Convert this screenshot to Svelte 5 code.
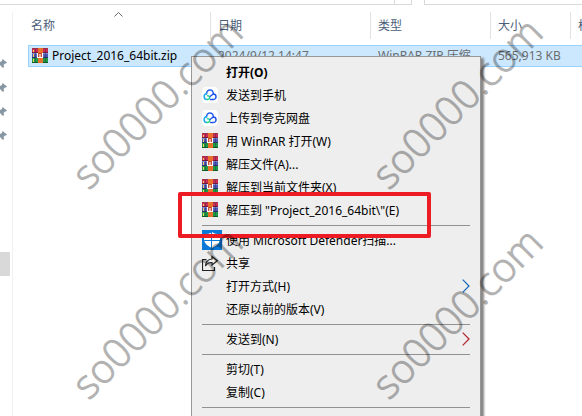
<script>
  const columns = [
    { key: 'name', label: '名称', sorted: true },
    { key: 'date', label: '日期' },
    { key: 'type', label: '类型' },
    { key: 'size', label: '大小' },
    { key: 'tag', label: '标' },
  ]

  const file = {
    name: 'Project_2016_64bit.zip',
    date: '2024/9/12 14:47',
    type: 'WinRAR ZIP 压缩...',
    size: '565,913 KB',
  }

  const groups = [
    [
      { label: '打开(O)', bold: true },
      { label: '发送到手机', icon: 'cloud' },
      { label: '上传到夸克网盘', icon: 'cloud' },
      { label: '用 WinRAR 打开(W)', icon: 'rar' },
      { label: '解压文件(A)...', icon: 'rar' },
      { label: '解压到当前文件夹(X)', icon: 'rar' },
      { label: '解压到 "Project_2016_64bit\\"(E)', icon: 'rar' },
    ],
    [
      { label: '使用 Microsoft Defender扫描...', icon: 'shield' },
      { label: '共享', icon: 'share' },
      { label: '打开方式(H)', arrow: 'blue' },
      { label: '还原以前的版本(V)' },
    ],
    [{ label: '发送到(N)', arrow: 'red' }],
    [{ label: '剪切(T)' }, { label: '复制(C)' }],
    [],
  ]

  const pins = [1, 2, 3, 4]

  const marks = [
    [89, 191],
    [389, 191],
    [89, 401],
    [389, 401],
  ]
</script>

{#snippet rarIcon()}
  <svg class="icon" width="16" height="16" viewBox="0 0 16 16" aria-hidden="true">
    <rect y="0" width="16" height="5" fill="#c92c55" />
    <rect y="0" width="16" height="1" fill="#a03048" />
    <rect y="4" width="16" height="1" fill="#7d1838" />
    <rect y="5" width="16" height="5" fill="#4d57b5" />
    <rect y="5" width="16" height="1" fill="#7a86d8" />
    <rect y="9" width="16" height="1" fill="#2b2f6e" />
    <rect y="10" width="16" height="5" fill="#1f9a45" />
    <rect y="14" width="16" height="1" fill="#0c6027" />
    <path d="M1 2h1v2H1zM1 6h1v3H1zM1 11h1v3H1z" fill="#f4d35c" />
    <path d="M3 1h1v14H3zM13 1h1v14h-1z" fill="#20284a" opacity=".35" />
    <rect x="6" y="0" width="5" height="15" fill="#e8702a" />
    <rect x="5" y="5" width="6" height="5" fill="#c33c22" />
    <path d="M5.500 5v4.500h5V5M8 6v3" fill="none" stroke="#fff" stroke-width="1.200" />
  </svg>
{/snippet}

<div class="window">
  <div class="toolbar">
    <div class="address"><span></span></div>
    <div class="search"></div>
  </div>

  <div class="content">
    <aside>
      <ul class="pins">
        {#each pins as pin (pin)}
          <li>
            <svg width="8" height="10" viewBox="0 0 8 10" aria-hidden="true">
              <path d="M2.500 0 7 3.500 6 4.500 5 4.500 3.500 6 4 8 3 9 0 6V3L2 2z" fill="#8796a3" />
            </svg>
          </li>
        {/each}
      </ul>
      <div class="current"></div>
    </aside>

    <main>
      <table>
        <thead>
          <tr>
            {#each columns as col (col.key)}
              <th class={col.key} scope="col">
                <span>{col.label}</span>
                {#if col.sorted}
                  <svg class="sort" width="9" height="5" viewBox="0 0 9 5" aria-hidden="true">
                    <path d="M.5 4.500l4-4 4 4" fill="none" stroke="#666" />
                  </svg>
                {/if}
              </th>
            {/each}
          </tr>
        </thead>
        <tbody>
          <tr>
            <td><div class="file">{@render rarIcon()}{file.name}</div></td>
            <td>{file.date}</td>
            <td>{file.type}</td>
            <td>{file.size}</td>
            <td></td>
          </tr>
        </tbody>
      </table>
    </main>
  </div>

  <div class="menu" role="menu">
    {#each groups as group, i}
      {#if i > 0}<hr />{/if}
      {#each group as item (item.label)}
        <button type="button" role="menuitem" class:bold={item.bold}>
          <span class="slot">
            {#if item.icon === 'rar'}
              {@render rarIcon()}
            {:else if item.icon === 'cloud'}
              <svg class="icon" width="16" height="16" viewBox="0 0 16 16" aria-hidden="true">
                <rect width="16" height="16" rx="4" fill="#fff" />
                <g fill="none" stroke-width="1.500" stroke-linecap="round">
                  <path d="M4.500 7C4.500 1.500 11.300 1.700 11.300 7" stroke="#2b63f0" />
                  <path d="M4.700 6.500C1.200 7 1.200 12.500 5 12.500" stroke="#20a8f4" />
                  <path d="M5 12.500C8.500 12.500 8.500 8.500 5.500 8.800" stroke="#25dc8c" />
                  <path d="M8.500 12.500h3c3.400 0 3.400-5.500-.2-5.500L8 9.500" stroke="#2354ee" />
                </g>
              </svg>
            {:else if item.icon === 'shield'}
              <svg class="icon" width="20" height="20" viewBox="0 0 20 20" aria-hidden="true">
                <rect width="20" height="20" fill="#0a78d7" />
                <path d="M10 2c2 1.500 4.500 2.200 8 2.200V9c0 4.500-4 7.200-8 9-4-1.800-8-4.500-8-9V4.200C5.500 4.200 8 3.500 10 2z" fill="#fff" />
                <path d="M9.500 2v16M2 10.500h16" stroke="#0a78d7" />
              </svg>
            {:else if item.icon === 'share'}
              <svg class="icon" width="16" height="16" viewBox="0 0 16 16" aria-hidden="true">
                <path d="M4.500 4.500h-4v11h12V12M10 1.500l5.300 4.300L10 10V7.500C7 7.300 5 8.500 3.500 11 3.700 7 6 4.300 10 4z" fill="none" stroke="#222" stroke-width="1.200" />
              </svg>
            {/if}
          </span>
          <span class="label">{item.label}</span>
          {#if item.arrow}
            <svg class="arrow {item.arrow}" width="8" height="14" viewBox="0 0 8 14" aria-hidden="true">
              <path d="M.7.700 7 7 .7 13.300" fill="none" stroke="currentColor" stroke-width="1.200" />
            </svg>
          {/if}
        </button>
      {/each}
    {/each}
  </div>

  <div class="highlight"></div>

  <svg class="watermark" aria-hidden="true">
    {#each marks as [x, y]}
      <text transform="translate({x} {y}) rotate(-45)">so0000.com</text>
    {/each}
  </svg>
</div>

<style>
  :global(body) {
    margin: 0;
    background: #fff;
  }

  .window {
    position: relative;
    height: 100vh;
    overflow: hidden;
    display: flex;
    flex-direction: column;
    font-family: "Noto Sans", "Noto Sans CJK SC", sans-serif;
    font-size: 12px;
    color: #000;
  }

  .toolbar {
    display: flex;
    gap: 12px;
    height: 5px;
    flex: none;
  }

  .address,
  .search {
    box-sizing: border-box;
    border: 1px solid #d9d9d9;
    border-top: 0;
  }

  .address {
    flex: 412;
    display: flex;
    justify-content: flex-end;
    border-left: 0;
  }

  .address span {
    width: 16px;
    border-left: 1px solid #d9d9d9;
  }

  .search {
    flex: 158;
    border-right: 0;
  }

  .content {
    flex: 1;
    display: flex;
    padding-top: 7px;
  }

  aside {
    width: 12px;
    flex: none;
    border-right: 1px solid #f0f0f0;
  }

  .pins {
    margin: 0;
    padding: 40px 0 0;
    list-style: none;
  }

  .pins li {
    display: flex;
    align-items: center;
    height: 24px;
  }

  .current {
    width: 10px;
    height: 24px;
    margin-top: 104px;
    background: #d9d9d9;
  }

  main {
    flex: 1;
    min-width: 0;
    padding-left: 15px;
  }

  table {
    width: 100%;
    table-layout: fixed;
    border-spacing: 0;
  }

  th {
    position: relative;
    padding: 0 0 6px;
    font-weight: normal;
    text-align: left;
    color: #4c607a;
  }

  th span {
    display: block;
    height: 27px;
    line-height: 27px;
    padding-left: 7px;
    border-right: 1px solid #e2e2e2;
    white-space: nowrap;
  }

  .name { width: 183px; }
  .date { width: 160px; }
  .type { width: 120px; }
  .size { width: 80px; }

  .name span {
    padding-left: 3px;
  }

  .tag span {
    border: 0;
  }

  .sort {
    position: absolute;
    top: 0;
    left: 86px;
  }

  td {
    height: 20px;
    line-height: 20px;
    padding: 0 0 0 7px;
    background: #cce8ff;
    border: solid #99d1ff;
    border-width: 1px 0;
    color: #6d6d6d;
    white-space: nowrap;
    overflow: hidden;
  }

  td:first-child {
    padding-left: 3px;
    border-left-width: 1px;
    color: #000;
  }

  .file {
    display: flex;
    align-items: center;
    gap: 4px;
  }

  .icon {
    display: block;
    flex: none;
  }

  .menu {
    position: absolute;
    top: 56px;
    left: 191px;
    box-sizing: border-box;
    width: 290px;
    height: 400px;
    padding: 4px 10px;
    background: #eee;
    border: 1px solid #979797;
    box-shadow: 3px 2px 2px #888;
  }

  .menu button {
    display: flex;
    align-items: center;
    box-sizing: border-box;
    width: 100%;
    height: 23px;
    padding: 0 0 2px;
    border: 0;
    background: none;
    font: inherit;
    color: inherit;
    text-align: left;
    white-space: nowrap;
  }

  .menu .bold {
    font-weight: bold;
  }

  .slot {
    width: 24px;
    flex: none;
  }

  .label {
    flex: 1;
  }

  .arrow.blue {
    color: #1667b8;
  }

  .arrow.red {
    color: #b3202c;
  }

  hr {
    height: 1px;
    margin: 3px 0;
    border: 0;
    background: #919191;
  }

  .highlight {
    position: absolute;
    top: 192px;
    left: 178px;
    box-sizing: border-box;
    width: 253px;
    height: 46px;
    border: 4px solid #ed1c24;
    border-radius: 2px;
  }

  .watermark {
    position: absolute;
    inset: 0;
    width: 100%;
    height: 100%;
    pointer-events: none;
  }

  .watermark text {
    font-family: "Open Sans", sans-serif;
    font-size: 40px;
    font-weight: 300;
    fill: #000;
    stroke: #000;
    stroke-width: 1px;
    opacity: 0.3;
  }
</style>
